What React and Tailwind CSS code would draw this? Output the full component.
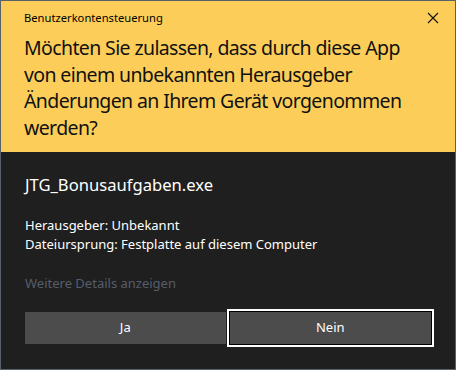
export default function App() {
  return (
    <div
      className="flex h-[370px] w-[456px] flex-col border border-[#5a6068] bg-[#1f1f1f]"
      style={{ fontFamily: '"Noto Sans", "Open Sans", sans-serif' }}
    >
      <header className="h-[151px] bg-[#fcce59] pl-[23px] pr-[12px] text-black">
        <div className="flex h-[34px] items-center justify-between">
          <span className="text-[11.2px]">Benutzerkontensteuerung</span>
          <svg width="12" height="12" viewBox="0 0 12 12" className="mr-[4px]">
            <path d="M1 1 L11 11 M11 1 L1 11" stroke="#111" strokeWidth="1.1" />
          </svg>
        </div>
        <h1 className="text-[19.5px] leading-[26.5px] tracking-[-0.62px] text-[#111]">
          Möchten Sie zulassen, dass durch diese App
          <br />
          von einem unbekannten Herausgeber
          <br />
          Änderungen an Ihrem Gerät vorgenommen
          <br />
          werden?
        </h1>
      </header>

      <main className="flex flex-1 flex-col px-[24px] text-white">
        <p className="mt-[21px] text-[16.6px] leading-[24px]">JTG_Bonusaufgaben.exe</p>
        <div className="mt-[19px] text-[13px] leading-[19px]">
          <p>Herausgeber: Unbekannt</p>
          <p>Dateiursprung: Festplatte auf diesem Computer</p>
        </div>
        <p className="mt-[20px] text-[13px] leading-[19px] text-[#565d6b]">
          Weitere Details anzeigen
        </p>
        <div className="mt-[19px] flex gap-[4px]">
          <button className="h-[32px] w-[201px] bg-[#4c4c4c] text-[13px] text-white">
            Ja
          </button>
          <button className="h-[32px] w-[202px] bg-[#4c4c4c] text-[13px] text-white outline-2 outline-offset-1 outline-white ring-1 ring-black">
            Nein
          </button>
        </div>
      </main>
    </div>
  );
}
